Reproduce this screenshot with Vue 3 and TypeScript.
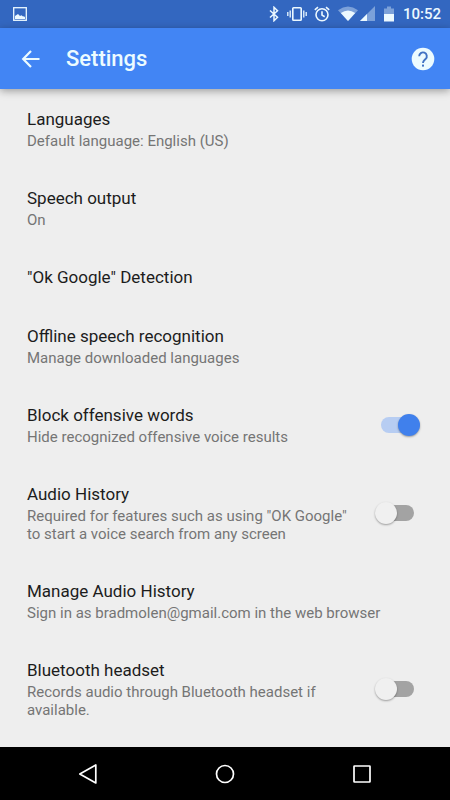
<script setup lang="ts">
import { reactive } from 'vue'

interface Setting {
  id: string
  title: string
  summary?: string
  enabled?: boolean
}

const settings = reactive<Setting[]>([
  { id: 'languages', title: 'Languages', summary: 'Default language: English (US)' },
  { id: 'speech', title: 'Speech output', summary: 'On' },
  { id: 'detection', title: '"Ok Google" Detection' },
  { id: 'offline', title: 'Offline speech recognition', summary: 'Manage downloaded languages' },
  { id: 'block', title: 'Block offensive words', summary: 'Hide recognized offensive voice results', enabled: true },
  {
    id: 'audio',
    title: 'Audio History',
    summary: 'Required for features such as using "OK Google" to start a voice search from any screen',
    enabled: false,
  },
  { id: 'manage', title: 'Manage Audio History', summary: 'Sign in as bradmolen@gmail.com in the web browser' },
  {
    id: 'bluetooth',
    title: 'Bluetooth headset',
    summary: 'Records audio through Bluetooth headset if available.',
    enabled: false,
  },
])
</script>

<template>
  <div class="screen">
    <div class="status">
      <svg class="picture" width="14" height="14" viewBox="0 0 14 14" aria-hidden="true">
        <rect x="0.7" y="0.7" width="12.6" height="12.6" fill="none" stroke="currentColor" stroke-width="1.3" />
        <path d="M2 12V9l1.500-1L5 7l2 2 1.500-.7L10 9.500l1-.3 1 1V12z" fill="currentColor" />
      </svg>
      <div class="indicators">
        <svg width="12" height="16" viewBox="0 0 12 16" aria-hidden="true">
          <path d="M2 4.500 9.500 11.300 6 14.700V1.300L9.500 4.700 2 11.500" fill="none" stroke="currentColor" stroke-width="1.500" />
        </svg>
        <svg class="vibrate" width="20" height="16" viewBox="0 0 20 16" aria-hidden="true">
          <rect x="5.800" y="1.800" width="8.400" height="12.400" rx="0.800" fill="none" stroke="currentColor" stroke-width="1.600" />
          <path d="M.8 6v4M3.200 4.500v7M16.800 4.500v7M19.200 6v4" stroke="currentColor" stroke-width="1.300" />
        </svg>
        <svg class="alarm" width="16" height="16" viewBox="0 0 16 16" aria-hidden="true">
          <g fill="none" stroke="currentColor" stroke-width="1.600">
            <circle cx="8" cy="8.800" r="6" />
            <path d="M8 5.300v3.800l2.700 1.700M.8 3.800l3.200-2.700M15.200 3.800l-3.200-2.700" />
          </g>
        </svg>
        <svg class="wifi" width="20" height="16" viewBox="0 0 20 16" aria-hidden="true">
          <path d="M0 4.200Q10-3 20 4.200L10 15z" fill="currentColor" opacity="0.400" />
          <path d="M2.800 7Q10 2 17.200 7L10 15z" fill="currentColor" />
        </svg>
        <svg class="signal" width="15" height="16" viewBox="0 0 15 16" aria-hidden="true">
          <path d="M0 15 15 0v15z" fill="currentColor" opacity="0.400" />
          <path d="M0 15 7 8v7z" fill="currentColor" />
        </svg>
        <svg class="battery" width="10" height="16" viewBox="0 0 10 16" aria-hidden="true">
          <path d="M0 2.500h3V.5h4v2h3V8H0z" fill="currentColor" opacity="0.400" />
          <path d="M0 8h10v7.500H0z" fill="currentColor" />
        </svg>
        <span class="clock">10:52</span>
      </div>
    </div>

    <header class="app-bar">
      <button class="icon-button" type="button" aria-label="Back">
        <svg width="20" height="20" viewBox="0 0 20 20" aria-hidden="true">
          <path d="M18.500 10H2.500M10 2 2.200 10 10 18" fill="none" stroke="currentColor" stroke-width="2.200" />
        </svg>
      </button>
      <h1>Settings</h1>
      <button class="icon-button" type="button" aria-label="Help">
        <svg width="24" height="24" viewBox="0 0 24 24" aria-hidden="true">
          <circle cx="12" cy="12" r="11.300" fill="currentColor" />
          <path d="M8.200 9.300a3.800 3.800 0 1 1 6.500 2.600c-1.500 1.500-2.700 2-2.700 4" fill="none" stroke="#4173c4" stroke-width="1.900" />
          <rect x="11" y="17.600" width="2" height="2" fill="#4173c4" />
        </svg>
      </button>
    </header>

    <main>
      <component
        :is="item.enabled === undefined ? 'button' : 'label'"
        v-for="item in settings"
        :key="item.id"
        class="row"
        :type="item.enabled === undefined ? 'button' : undefined"
        :for="item.enabled === undefined ? undefined : item.id"
      >
        <span class="copy">
          <span class="title">{{ item.title }}</span>
          <span v-if="item.summary" class="summary">{{ item.summary }}</span>
        </span>
        <input
          v-if="item.enabled !== undefined"
          :id="item.id"
          v-model="item.enabled"
          class="switch"
          type="checkbox"
          role="switch"
        />
      </component>
    </main>

    <nav class="nav-bar" aria-label="System">
      <button type="button" aria-label="Back">
        <svg width="22" height="22" viewBox="0 0 22 22" aria-hidden="true">
          <path d="M18.800 2v18L2.800 11z" fill="none" stroke="currentColor" stroke-width="1.700" stroke-linejoin="round" />
        </svg>
      </button>
      <button type="button" aria-label="Home">
        <svg width="22" height="22" viewBox="0 0 22 22" aria-hidden="true">
          <circle cx="11" cy="11" r="8.500" fill="none" stroke="currentColor" stroke-width="1.700" />
        </svg>
      </button>
      <button type="button" aria-label="Recent apps">
        <svg width="22" height="22" viewBox="0 0 22 22" aria-hidden="true">
          <rect x="3" y="3" width="16" height="16" rx="0.500" fill="none" stroke="currentColor" stroke-width="1.700" />
        </svg>
      </button>
    </nav>
  </div>
</template>

<style>
body {
  margin: 0;
  background: #eee;
}
</style>

<style scoped>
.screen {
  display: flex;
  flex-direction: column;
  min-height: 100vh;
  background: #eee;
  font-family: Roboto, "Liberation Sans", sans-serif;
}

button {
  border: 0;
  padding: 0;
  background: none;
  color: inherit;
  font: inherit;
  cursor: pointer;
}

svg {
  display: block;
}

.status {
  display: flex;
  align-items: center;
  justify-content: space-between;
  height: 28px;
  padding: 0 9px 0 13px;
  background: #3367c0;
  color: #ecf9ff;
}

.indicators {
  display: flex;
  align-items: center;
}

.vibrate {
  margin-left: 7px;
}

.alarm {
  margin-left: 7px;
}

.wifi {
  margin-left: 8px;
}

.signal {
  margin-left: 2px;
}

.battery {
  margin-left: 9px;
}

.clock {
  margin-left: 9px;
  font-size: 15px;
  line-height: 28px;
  font-weight: 500;
}

.app-bar {
  display: flex;
  align-items: center;
  height: 61px;
  padding: 0 15px 0 21px;
  background: #4285f4;
  color: #ecfbff;
  box-shadow: 0 2px 8px rgba(0, 0, 0, 0.35);
  z-index: 1;
}

h1 {
  flex: 1;
  margin: 0 0 0 25px;
  font-size: 22px;
  line-height: 28px;
  font-weight: 500;
}

main {
  flex: 1;
}

.row {
  display: flex;
  align-items: center;
  justify-content: space-between;
  gap: 16px;
  box-sizing: border-box;
  width: 100%;
  padding: 19px 30px 18px 27px;
  text-align: left;
  cursor: pointer;
}

.copy {
  display: flex;
  flex-direction: column;
  gap: 2px;
}

.title {
  color: #1c1c1c;
  font-size: 17px;
  line-height: 22px;
}

.summary {
  color: #757575;
  font-size: 15px;
  line-height: 18px;
}

.switch {
  appearance: none;
  display: flex;
  flex: none;
  align-items: center;
  position: relative;
  width: 45px;
  height: 22px;
  margin: 0;
  padding: 0 6px;
  cursor: pointer;
}

.switch::before {
  content: "";
  width: 33px;
  height: 16px;
  border-radius: 8px;
  background: #a3a3a3;
}

.switch::after {
  content: "";
  position: absolute;
  top: 0;
  left: 0;
  width: 22px;
  height: 22px;
  border-radius: 50%;
  background: #f0f0f0;
  box-shadow: 0 1px 2px rgba(0, 0, 0, 0.35);
}

.switch:checked::before {
  background: #b7cdf2;
}

.switch:checked::after {
  left: auto;
  right: 0;
  background: #4080ec;
}

.nav-bar {
  display: grid;
  grid-template-columns: repeat(3, 1fr);
  height: 53px;
  padding: 0 19px;
  background: #000;
  color: #fff;
}

.nav-bar button {
  display: flex;
  align-items: center;
  justify-content: center;
}
</style>
